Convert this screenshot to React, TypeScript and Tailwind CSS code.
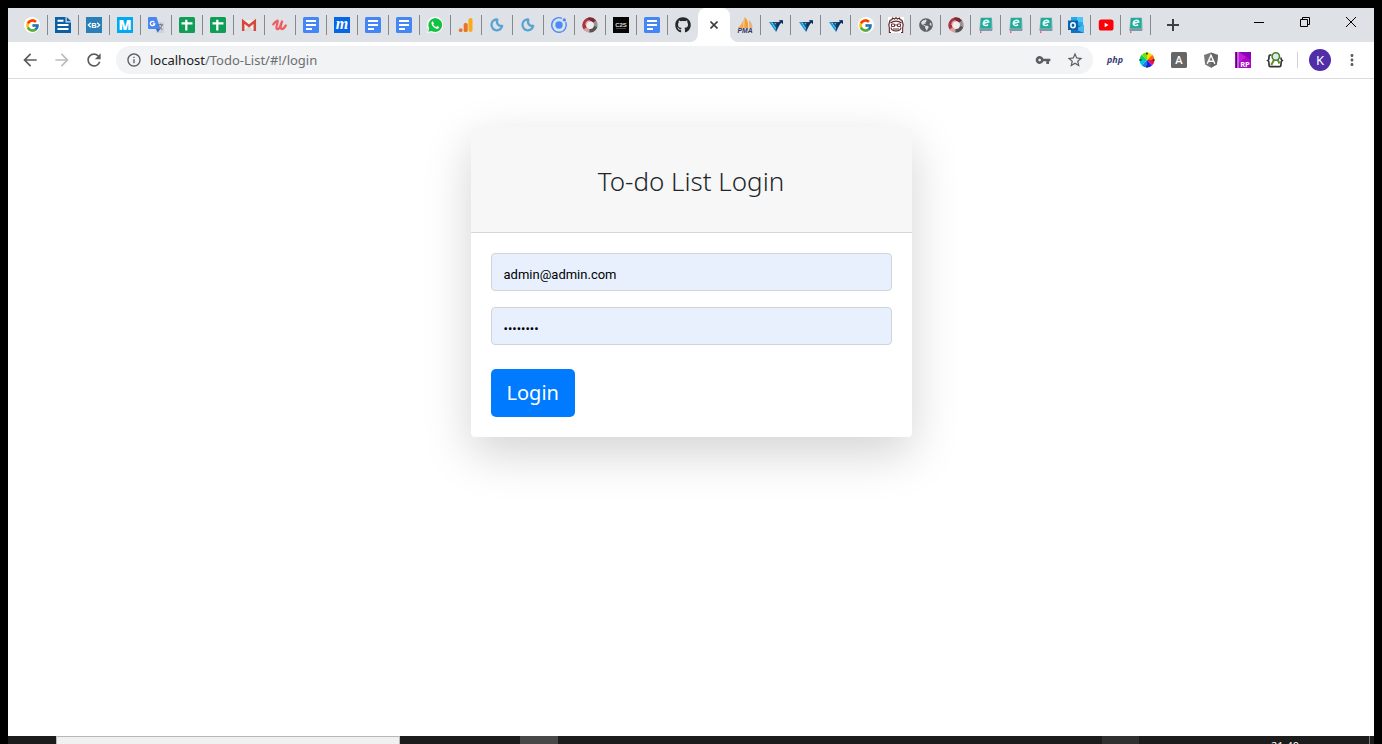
import type { ReactNode } from 'react';
import { FcGoogle } from 'react-icons/fc';
import { FaGithub, FaGlobeAmericas } from 'react-icons/fa';
import {
  MdArrowBack,
  MdArrowForward,
  MdInfoOutline,
  MdMoreVert,
  MdRefresh,
  MdStarBorder,
  MdVpnKey,
} from 'react-icons/md';

function Svg({ children }: { children: ReactNode }) {
  return (
    <svg viewBox="0 0 16 16" className="size-4 overflow-visible" aria-hidden="true">
      {children}
    </svg>
  );
}

const google = (
  <span className="flex size-4 items-center justify-center rounded-full bg-white">
    <FcGoogle size={15} />
  </span>
);

const blog = (
  <Svg>
    <path d="M0 0h10.500v5.500H16V16H0z" fill="#0b5fa5" />
    <path d="M11.700 0L16 4.300h-4.300z" fill="#0b5fa5" />
    <path d="M2.500 3.800h6M2.500 8h11M2.500 12h11" stroke="#fff" strokeWidth="1.900" />
  </Svg>
);

const bracket = (
  <Svg>
    <path d="M0 0h16v16H0z" fill="#2a7fb8" />
    <path d="M4.800 5.700L2.300 8l2.500 2.300M11.200 5.700L13.700 8l-2.500 2.300" fill="none" stroke="#fff" strokeWidth="1.200" />
    <text x="8" y="10.800" textAnchor="middle" fontFamily="Liberation Sans, sans-serif" fontWeight="700" fontSize="7.500" fill="#fff">B</text>
  </Svg>
);

const moqups = (
  <Svg>
    <path d="M0 0h16v16H0z" fill="#02a8f0" />
    <text x="8" y="12.800" textAnchor="middle" fontFamily="Open Sans, sans-serif" fontWeight="800" fontSize="13.500" fill="#fff">M</text>
  </Svg>
);

const translate = (
  <Svg>
    <path d="M7 5h9v11H8z" fill="#d0d3d9" />
    <path d="M1 0h7.500l3.700 12H1a1 1 0 0 1-1-1V1a1 1 0 0 1 1-1z" fill="#4a86ef" />
    <path d="M8 12h4.200L9.800 15.500z" fill="#3268cc" />
    <path d="M9.700 7.800h5.500M12.400 6.600v1.200M14 8c-.4 2-1.700 3.600-3 4.500M11.300 9.500l3 3.500" fill="none" stroke="#66768c" />
    <path d="M6.400 5.300A2.200 2.200 0 1 0 6.700 7H4.800" fill="none" stroke="#fff" strokeWidth="1.300" />
  </Svg>
);

const sheet = (
  <Svg>
    <rect width="16" height="16" rx="1.500" fill="#109d58" />
    <path d="M2.500 6.400h11M7.300 2.700v10.800" stroke="#fff" strokeWidth="2.200" />
  </Svg>
);

const gmail = (
  <Svg>
    <path d="M1 3h14v11H1z" fill="#f1eeec" />
    <path d="M3 14l5-5 5 5z" fill="#ddd9d7" />
    <path d="M2.200 14V4.300L8 9l5.800-4.700V14" fill="none" stroke="#d5483c" strokeWidth="2.500" />
  </Svg>
);

const udemy = (
  <Svg>
    <path d="M1.200 7.300C3.700 5.500 4.500 3 5.600 3.600c1.100.6-1.700 5.400-1.200 7.600.5 1.600 2.400 1.200 3.500-1.200L10.300 3.700C9 7.800 7.800 11.600 9.600 12c2 .4 3.600-2.600 4.200-3.600" fill="none" stroke="#ef5c5d" strokeWidth="2.200" strokeLinecap="round" />
  </Svg>
);

const doc = (
  <Svg>
    <rect width="16" height="16" rx="1.500" fill="#4486f6" />
    <path d="M3 4h10M3 8h10M3 12h6" stroke="#fff" strokeWidth="1.900" />
  </Svg>
);

const mInvision = (
  <Svg>
    <path d="M0 0h16v16H0z" fill="#0566e8" />
    <text x="8" y="12" textAnchor="middle" fontFamily="Liberation Serif, serif" fontStyle="italic" fontWeight="700" fontSize="16" fill="#fff">m</text>
  </Svg>
);

const whatsapp = (
  <Svg>
    <path d="M.2 16L1.200 12A8 8 0 1 1 4.300 14.900z" fill="#fff" />
    <path d="M1.300 14.800l.9-3.500A6.900 6.900 0 1 1 4.700 13.900z" fill="#13c243" />
    <path d="M5.600 4.200c-.8.300-1.300 1.300-1.100 2.300.5 2.600 3.200 5.200 5.700 5.400 1.100 0 2-.7 2-1.800L10.300 9l-1 1.100C8 9.600 6.800 8.500 6.200 7.200l.8-1z" fill="#fff" />
  </Svg>
);

const analytics = (
  <Svg>
    <rect x="10.500" y="1" width="4" height="14" rx="2" fill="#faab18" />
    <rect x="5.700" y="6" width="4" height="9" rx="1.500" fill="#ea7426" />
    <circle cx="2.700" cy="13.200" r="1.900" fill="#ea7426" />
  </Svg>
);

const moon = (
  <Svg>
    <path d="M8.300 2.600C5 2 2.400 4.600 2.500 7.800c.1 3.400 2.500 5.600 5.400 5.500 2.800-.1 4.700-2 5.300-4.500-3.300.8-6.300-2.200-4.900-6.200z" fill="none" stroke="#5ba3d0" strokeWidth="2.300" strokeLinejoin="round" />
  </Svg>
);

const ionic = (
  <Svg>
    <circle cx="8" cy="8" r="3.700" fill="#4a8bfc" />
    <path d="M11 1.300A7.300 7.300 0 1 0 14.700 5" fill="none" stroke="#4a8bfc" strokeWidth="1.400" />
    <circle cx="13.300" cy="2.900" r="1.700" fill="#4a8bfc" />
  </Svg>
);

const ring = (
  <Svg>
    <circle cx="8" cy="8" r="4" fill="#f0edef" />
    <path d="M8 2.200A5.800 5.800 0 0 0 4 12.200" fill="none" stroke="#a93540" strokeWidth="3.600" />
    <path d="M3.200 11.200A5.800 5.800 0 0 0 8.500 13.800" fill="none" stroke="#d9a0a2" strokeWidth="3.600" />
    <path d="M7.500 13.800A5.800 5.800 0 0 0 13.700 9" fill="none" stroke="#565152" strokeWidth="3.600" />
    <path d="M13.600 9.500A5.800 5.800 0 0 0 12 3.800" fill="none" stroke="#9a9494" strokeWidth="3.600" />
    <path d="M12.600 4.500A5.800 5.800 0 0 0 6.500 2.400" fill="none" stroke="#7e2730" strokeWidth="3.600" />
    <path d="M3.800 8A4.200 4.200 0 0 1 8 3.800" fill="none" stroke="#dfb0b3" strokeWidth="1.200" />
  </Svg>
);

const c2s = (
  <Svg>
    <path d="M0 0h16v16H0z" fill="#050505" />
    <text x="8" y="9.500" textAnchor="middle" fontFamily="Liberation Sans, sans-serif" fontWeight="700" fontSize="6" fill="#ddd">C2S</text>
    <path d="M3 11.500h10" stroke="#555" strokeWidth=".8" />
  </Svg>
);

const github = <FaGithub size={16} color="#24292e" />;

const pma = (
  <Svg>
    <path d="M6.500 2v9H.8C3.500 9 5.500 6 6.500 2z" fill="#f7a94b" />
    <path d="M7.500 0c3 2.500 4 6 3.500 11H7.300z" fill="#f89c2a" />
    <path d="M11.800 3c2.600 2 3.500 4 3.700 8h-3.300z" fill="#e9b478" />
    <text x="8" y="15.500" textAnchor="middle" fontFamily="Liberation Sans, sans-serif" fontWeight="700" fontStyle="italic" fontSize="6.800" fill="#33335f">PMA</text>
  </Svg>
);

const vee = (
  <Svg>
    <path d="M1 5h5.500L8 9v6z" fill="#1598d4" />
    <path d="M8 15V9l2-4h3z" fill="#0f3d70" />
    <path d="M4.500 5h7L8 10.500z" fill="#164978" />
    <path d="M8.800 8.500L14 3.800" stroke="#0d2f5c" strokeWidth="1.900" />
    <path d="M10.800 3.200H15v4z" fill="#0d2f5c" />
    <path d="M4 6l4 6M7 6l1 2" stroke="#c8e9f7" strokeWidth=".8" strokeDasharray="1.500 1" />
  </Svg>
);

const face = (
  <Svg>
    <path d="M0 0h16v16H0z" fill="#fff" />
    <path d="M3 15.500H1.300V11L.8 7.500 2 3.500l2-1L4.500 1l2 1L8 .7 9.500 2 11.500 1l.5 1.500 2 1 1.200 4-.5 3.500v4.500H13M2.500 6c3-2.500 8-2.500 11 0M3 10.500c.5 4.500 9.500 4.500 10 0M5 12h6" fill="none" stroke="#5f2929" strokeWidth="1.200" />
    <path d="M3.500 7h3v2.500h-3zM9.500 7h3v2.500h-3zM6.500 8h3" fill="none" stroke="#6f3434" />
  </Svg>
);

const globe = <FaGlobeAmericas size={14} color="#5f6368" />;

const ebook = (
  <Svg>
    <path d="M2.500 .5h11.500l.8 13H1.200z" fill="#9db9be" />
    <path d="M3 1h10.500v10.500H2z" fill="#20ab9b" />
    <path d="M1.500 12h12.500v2H2z" fill="#7f9aa6" />
    <path d="M5 6.500L10.800 5C10.300 2.500 6 2.700 5.300 6c-.4 2.500 3 3.300 4.800 1.600" fill="none" stroke="#e8fffa" strokeWidth="1.500" />
    <path d="M2 14.300h1.400V16H2z" fill="#ee5565" />
  </Svg>
);

const outlook = (
  <Svg>
    <path d="M3 0h12v9H3z" fill="#28a8ea" />
    <path d="M9 0h6v5H9z" fill="#4cc5f7" />
    <path d="M3 8l13 1v7H3z" fill="#1272bf" />
    <path d="M16 7.500V16l-9-4z" fill="#43b7ed" />
    <path d="M0 3.500h10v9.500H0z" fill="#0861ad" />
    <ellipse cx="5" cy="8.200" rx="2.200" ry="2.500" fill="none" stroke="#fff" strokeWidth="1.500" />
  </Svg>
);

const youtube = (
  <Svg>
    <rect x=".8" y="2.500" width="14.700" height="11" rx="2.600" fill="#fb0007" />
    <path d="M6.700 5.800v4.400L10.500 8z" fill="#fff" />
  </Svg>
);

type Tab = { name: string; icon: ReactNode };

const leftTabs: Tab[] = [
  { name: 'Google', icon: google },
  { name: 'Blog', icon: blog },
  { name: 'Code', icon: bracket },
  { name: 'Moqups', icon: moqups },
  { name: 'Translate', icon: translate },
  { name: 'Sheet one', icon: sheet },
  { name: 'Sheet two', icon: sheet },
  { name: 'Gmail', icon: gmail },
  { name: 'Udemy', icon: udemy },
  { name: 'Document one', icon: doc },
  { name: 'Mail', icon: mInvision },
  { name: 'Document two', icon: doc },
  { name: 'Document three', icon: doc },
  { name: 'WhatsApp', icon: whatsapp },
  { name: 'Analytics', icon: analytics },
  { name: 'Moon one', icon: moon },
  { name: 'Moon two', icon: moon },
  { name: 'Ionic', icon: ionic },
  { name: 'Ring', icon: ring },
  { name: 'C2S', icon: c2s },
  { name: 'Document four', icon: doc },
];

const rightTabs: Tab[] = [
  { name: 'phpMyAdmin', icon: pma },
  { name: 'Chart one', icon: vee },
  { name: 'Chart two', icon: vee },
  { name: 'Chart three', icon: vee },
  { name: 'Google search', icon: google },
  { name: 'Face', icon: face },
  { name: 'Web', icon: globe },
  { name: 'Ring two', icon: ring },
  { name: 'E-book one', icon: ebook },
  { name: 'E-book two', icon: ebook },
  { name: 'E-book three', icon: ebook },
  { name: 'Outlook', icon: outlook },
  { name: 'YouTube', icon: youtube },
  { name: 'E-book four', icon: ebook },
];

function TabButton({ tab, wide, divider = true }: { tab: Tab; wide?: boolean; divider?: boolean }) {
  return (
    <div className={`flex shrink-0 items-center ${wide ? 'w-[31px]' : 'w-[30px]'}`}>
      <button type="button" aria-label={tab.name} className="flex h-5 flex-1 items-center justify-center">
        {tab.icon}
      </button>
      {divider && <span className="h-5 w-px bg-[#85888d]" />}
    </div>
  );
}

function ActiveTab() {
  return (
    <div className="relative flex w-8 shrink-0">
      <span className="absolute bottom-0 -left-2 size-2 bg-white">
        <span className="block size-2 rounded-br-lg bg-[#dee1e6]" />
      </span>
      <span className="absolute -right-2 bottom-0 size-2 bg-white">
        <span className="block size-2 rounded-bl-lg bg-[#dee1e6]" />
      </span>
      <button
        type="button"
        aria-label="Close tab"
        className="flex flex-1 items-center justify-center rounded-t-lg bg-white text-[#3c4043]"
      >
        <svg viewBox="0 0 8 8" className="size-2" aria-hidden="true">
          <path d="M.5.5l7 7M7.500.5l-7 7" stroke="currentColor" strokeWidth="1.600" />
        </svg>
      </button>
    </div>
  );
}

function TabStrip() {
  return (
    <header className="flex h-[34px] items-stretch overflow-hidden bg-[#dee1e6]">
      <nav aria-label="Tabs" className="flex pl-[9px]">
        {leftTabs.map((tab) => (
          <TabButton key={tab.name} tab={tab} wide />
        ))}
        <TabButton tab={{ name: 'GitHub', icon: github }} divider={false} />
        <ActiveTab />
        {rightTabs.map((tab) => (
          <TabButton key={tab.name} tab={tab} wide={tab.name === 'phpMyAdmin'} />
        ))}
        <button type="button" aria-label="New tab" className="ml-4 flex items-center text-[#3c4043]">
          <svg viewBox="0 0 12 12" className="size-3" aria-hidden="true">
            <path d="M6 0v12M0 6h12" stroke="currentColor" strokeWidth="2" />
          </svg>
        </button>
      </nav>
      <div className="ml-auto flex h-7 items-center text-black">
        <button type="button" aria-label="Minimize" className="flex w-[46px] justify-center">
          <svg viewBox="0 0 10 10" className="size-[10px]" aria-hidden="true">
            <path d="M0 5.500h10" stroke="currentColor" />
          </svg>
        </button>
        <button type="button" aria-label="Restore" className="flex w-[46px] justify-center">
          <svg viewBox="0 0 10 10" className="size-[10px]" fill="none" stroke="currentColor" aria-hidden="true">
            <path d="M.5 2.500h7v7h-7zM2.500 2.500v-2h7v7h-2" />
          </svg>
        </button>
        <button type="button" aria-label="Close window" className="flex w-[46px] justify-center">
          <svg viewBox="0 0 10 10" className="size-[10px]" aria-hidden="true">
            <path d="M0 0l10 10M10 0L0 10" stroke="currentColor" />
          </svg>
        </button>
      </div>
    </header>
  );
}

const wedges = [
  { d: 'M8 8L8 .5A7.500 7.500 0 0 1 13.300 2.700Z', color: '#f2e600' },
  { d: 'M8 8L13.300 2.700A7.500 7.500 0 0 1 15.500 8Z', color: '#ff6a00' },
  { d: 'M8 8L15.500 8A7.500 7.500 0 0 1 13.300 13.300Z', color: '#f01048' },
  { d: 'M8 8L13.300 13.300A7.500 7.500 0 0 1 8 15.500Z', color: '#2020f0' },
  { d: 'M8 8L8 15.500A7.500 7.500 0 0 1 2.700 13.300Z', color: '#1080f0' },
  { d: 'M8 8L2.700 13.300A7.500 7.500 0 0 1 .5 8Z', color: '#00c8d8' },
  { d: 'M8 8L.5 8A7.500 7.500 0 0 1 2.700 2.700Z', color: '#00d36b' },
  { d: 'M8 8L2.700 2.700A7.500 7.500 0 0 1 8 .5Z', color: '#7be000' },
];

const extensions: Tab[] = [
  {
    name: 'php',
    icon: <span className="font-['Noto_Sans',sans-serif] text-[9px] font-bold italic text-[#3c3f78]">php</span>,
  },
  {
    name: 'Color picker',
    icon: (
      <Svg>
        {wedges.map((w) => (
          <path key={w.color} d={w.d} fill={w.color} />
        ))}
        <path d="M8 .5v2M8 13.500v2M.5 8h2M13.500 8h2" stroke="#222" strokeWidth="1.500" />
      </Svg>
    ),
  },
  {
    name: 'Font finder',
    icon: (
      <Svg>
        <rect width="16" height="16" rx="1.500" fill="#666" />
        <text x="8" y="12" textAnchor="middle" fontFamily="Open Sans, sans-serif" fontWeight="600" fontSize="11" fill="#fff">A</text>
      </Svg>
    ),
  },
  {
    name: 'Angular',
    icon: (
      <Svg>
        <path d="M8 .5l7 2.400-1.100 9.500L8 15.700l-5.900-3.300L1 2.900z" fill="#777" />
        <path d="M8 .5l7 2.400-1.100 9.500L8 15.700z" fill="#666" />
        <path d="M4.200 11.800L8 3.300l3.800 8.500M5.700 9.200h4.600" fill="none" stroke="#fff" strokeWidth="1.400" />
      </Svg>
    ),
  },
  {
    name: 'RP',
    icon: (
      <Svg>
        <path d="M0 0h16v16H0z" fill="#a80ac4" />
        <path d="M4 0h12v8z" fill="#8c05b5" />
        <path d="M4 0l7 5-7 6z" fill="#c41bd8" />
        <path d="M1.500 0v16" stroke="#4f096c" />
        <path d="M3 0v16" stroke="#f0b8f5" />
        <text x="10" y="14.500" textAnchor="middle" fontFamily="Open Sans, sans-serif" fontWeight="700" fontSize="7.500" fill="#fff">RP</text>
      </Svg>
    ),
  },
  {
    name: 'JSON search',
    icon: (
      <Svg>
        <path d="M4.500 3H3.200C2.200 3 2 4 2 5.500s0 2.500-1 3c1 .5 1 2 1 3.500s.2 2.700 1.500 2.700h9c1.300 0 1.500-1.200 1.500-2.700s.3-3 1-3.500c-1-.5-1-1.500-1-3" fill="none" stroke="#333" strokeWidth="1.700" />
        <path d="M7.200 7.500L4.300 13M10.500 7.500l2 4" stroke="#5d8e2f" strokeWidth="2" />
        <circle cx="8.800" cy="4.500" r="3.700" fill="#d8ecf2" stroke="#527f28" strokeWidth="1.600" />
      </Svg>
    ),
  },
];

function Toolbar() {
  return (
    <div className="flex h-[37px] items-center border-b border-[#d9dbde] bg-white pl-3 text-[#5a5d61]">
      <button type="button" aria-label="Back" className="flex w-5 justify-center">
        <MdArrowBack size={20} />
      </button>
      <button type="button" aria-label="Forward" className="ml-3 flex w-5 justify-center text-[#bcbdbf]">
        <MdArrowForward size={20} />
      </button>
      <button type="button" aria-label="Reload" className="ml-3 flex w-5 justify-center">
        <MdRefresh size={20} />
      </button>
      <div className="ml-3 flex h-7 flex-1 items-center rounded-full bg-[#f1f3f4] pr-[9px] pl-[10px]">
        <MdInfoOutline size={16} className="shrink-0" />
        <p className="ml-2 flex-1 font-['Noto_Sans',sans-serif] text-[13px] leading-5 text-[#6b6e72]">
          <span className="text-[#202124]">localhost</span>/Todo-List/#!/login
        </p>
        <button type="button" aria-label="Saved passwords">
          <MdVpnKey size={16} />
        </button>
        <button type="button" aria-label="Bookmark this page" className="ml-[15px]">
          <MdStarBorder size={18} />
        </button>
      </div>
      <div className="ml-[14px] flex gap-4">
        {extensions.map((ext) => (
          <button key={ext.name} type="button" aria-label={ext.name} className="flex size-4 items-center justify-center">
            {ext.icon}
          </button>
        ))}
      </div>
      <span className="ml-[14px] h-4 w-px bg-[#cfd1d4]" />
      <button
        type="button"
        aria-label="Profile K"
        className="ml-[11px] size-[22px] rounded-full bg-[#512da8] font-['Noto_Sans',sans-serif] text-[13px] leading-[22px] text-white"
      >
        K
      </button>
      <button type="button" aria-label="Menu" className="mr-[13px] ml-3">
        <MdMoreVert size={18} />
      </button>
    </div>
  );
}

function LoginCard() {
  const field =
    "h-[38px] w-full rounded border border-[#ced4da] bg-[#e8f0fe] px-3 pt-1 font-['Roboto',sans-serif] text-[13px] text-black";
  return (
    <section className="mx-auto mt-12 w-full max-w-[441px] overflow-hidden rounded bg-white shadow-[0_16px_48px_rgba(0,0,0,0.175)]">
      <div className="border-b border-[#d6d6d6] bg-[#f7f7f7] pt-[37px] pb-[34px]">
        <h1 className="text-center font-['Noto_Sans',sans-serif] text-[26px] leading-[34px] font-light text-[#212529]">
          To-do List Login
        </h1>
      </div>
      <form className="flex flex-col items-start p-5" onSubmit={(e) => e.preventDefault()}>
        <input type="email" aria-label="Email" defaultValue="admin@admin.com" className={field} />
        <input type="password" aria-label="Password" defaultValue="password" className={`${field} mt-4`} />
        <button
          type="submit"
          className="mt-6 h-12 rounded-[5px] bg-[#007bff] px-4 font-['Noto_Sans',sans-serif] text-[20px] leading-[30px] text-white"
        >
          Login
        </button>
      </form>
    </section>
  );
}

function Taskbar() {
  return (
    <footer className="flex h-2 items-start overflow-hidden bg-[#1c1c1c]">
      <div className="ml-12 h-2 w-[344px] border border-b-0 border-[#b8b8b8] bg-[#f0f0f0]" />
      <div className="ml-[120px] h-2 w-[38px] bg-[#484848]" />
      <div className="ml-auto h-2 w-[37px] bg-[#303030]" />
      <time className="mr-[70px] ml-[132px] pt-1 font-['Open_Sans',sans-serif] text-[11px] leading-3 text-white">
        21:40
      </time>
      <span className="mr-1 h-2 w-px bg-[#777]" />
    </footer>
  );
}

export default function App() {
  return (
    <div className="flex min-h-screen flex-col bg-black px-2 pt-2">
      <TabStrip />
      <Toolbar />
      <main className="flex-1 bg-white">
        <LoginCard />
      </main>
      <Taskbar />
    </div>
  );
}
